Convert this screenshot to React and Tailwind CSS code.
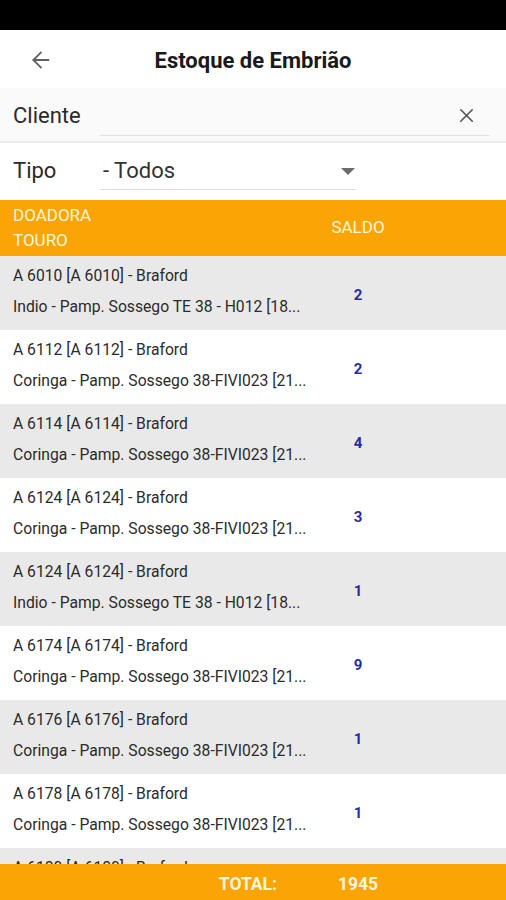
import { ArrowLeft, X } from 'lucide-react';

const rows = [
    ['A 6010 [A 6010] - Braford', 'Indio - Pamp. Sossego TE 38 - H012 [18...', 2],
    ['A 6112 [A 6112] - Braford', 'Coringa - Pamp. Sossego 38-FIVI023 [21...', 2],
    ['A 6114 [A 6114] - Braford', 'Coringa - Pamp. Sossego 38-FIVI023 [21...', 4],
    ['A 6124 [A 6124] - Braford', 'Coringa - Pamp. Sossego 38-FIVI023 [21...', 3],
    ['A 6124 [A 6124] - Braford', 'Indio - Pamp. Sossego TE 38 - H012 [18...', 1],
    ['A 6174 [A 6174] - Braford', 'Coringa - Pamp. Sossego 38-FIVI023 [21...', 9],
    ['A 6176 [A 6176] - Braford', 'Coringa - Pamp. Sossego 38-FIVI023 [21...', 1],
    ['A 6178 [A 6178] - Braford', 'Coringa - Pamp. Sossego 38-FIVI023 [21...', 1],
    ['A 6180 [A 6180] - Braford', 'Coringa - Pamp. Sossego 38-FIVI023 [21...', 1],
];

export default function App() {
    return (
        <div className="w-[506px] h-[900px] flex flex-col bg-white overflow-hidden font-['Roboto',sans-serif] text-[#212121]">
            {/* status bar */}
            <div className="h-[30px] shrink-0 bg-black" />

            {/* toolbar */}
            <div className="h-[58px] shrink-0 flex items-center pl-[28px] relative">
                <ArrowLeft size={26} strokeWidth={1.7} className="text-[#616161] mt-[2px]" />
                <h1 className="absolute left-0 right-0 text-center text-[22px] font-bold text-[#1a1a1a] pointer-events-none mt-[2px]">
                    Estoque de Embrião
                </h1>
            </div>

            {/* cliente */}
            <div className="h-[55px] shrink-0 flex items-center bg-[#fafafa] border-b-2 border-[#ececec] pl-[13px] pr-[16px]">
                <span className="w-[87px] text-[22px] text-[#2a2a2a] mt-[2px]">Cliente</span>
                <div className="flex-1 h-full flex items-end pb-[5px]">
                    <div className="flex-1 flex items-center justify-end border-b border-[#e2e2e2] h-[40px] pr-[12px]">
                        <X size={23} strokeWidth={1.7} className="text-[#555]" />
                    </div>
                </div>
            </div>

            {/* tipo */}
            <div className="h-[55px] shrink-0 flex items-center pl-[13px]">
                <span className="w-[87px] text-[22px] text-[#2a2a2a]">Tipo</span>
                <div className="w-[256px] h-full flex items-end pb-[8px]">
                    <div className="flex-1 flex items-center justify-between border-b border-[#dcdcdc] h-[38px] pl-[3px] pr-[1px]">
                        <span className="text-[22px] text-[#333]">- Todos</span>
                        <svg width="14" height="8" viewBox="0 0 14 8" className="mt-[2px]">
                            <path d="M0 0 L14 0 L7 7 Z" fill="#6b6b6b" />
                        </svg>
                    </div>
                </div>
            </div>

            {/* table header */}
            <div className="h-[56px] shrink-0 flex items-center bg-[#faa505] text-[#fff6da] text-[17px] mt-[2px]">
                <div className="w-[310px] pl-[13px] leading-[25px]">
                    <div>DOADORA</div>
                    <div>TOURO</div>
                </div>
                <div className="w-[96px] text-center">SALDO</div>
            </div>

            {/* rows */}
            <div className="flex-1 overflow-hidden">
                {rows.map(([doadora, touro, saldo], i) => (
                    <div
                        key={i}
                        className={`h-[74px] flex items-center ${i % 2 === 0 ? 'bg-[#e9e9e9]' : 'bg-white'}`}
                    >
                        <div className="w-[310px] pl-[13px] text-[15.7px] text-[#2b2b2b] leading-[31px] -mt-[4px] whitespace-nowrap overflow-hidden">
                            <div>{doadora}</div>
                            <div>{touro}</div>
                        </div>
                        <div className="w-[96px] text-center text-[15px] font-bold text-[#2a2aa6] mt-[5px]">{saldo}</div>
                    </div>
                ))}
            </div>

            {/* footer */}
            <div className="h-[36px] shrink-0 flex items-center bg-[#faa505] text-[#fff6da] text-[17.5px] font-bold pt-[5px]">
                <div className="w-[310px] text-right pr-[33px]">TOTAL:</div>
                <div className="w-[96px] text-center">1945</div>
            </div>
        </div>
    );
}
